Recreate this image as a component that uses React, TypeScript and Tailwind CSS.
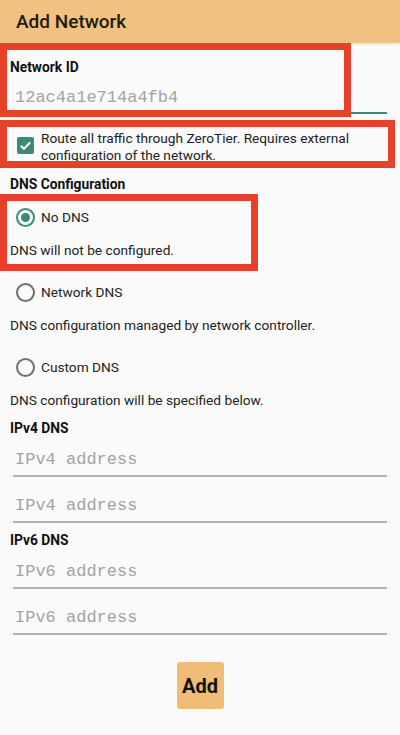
import React from "react";

const font = { fontFamily: "Roboto, 'Noto Sans', sans-serif" };

function Radio({ checked, label }: { checked?: boolean; label: string }) {
  return (
    <div className="flex h-[36px] items-center pl-[16px]">
      <div
        className={
          checked
            ? "flex h-[19px] w-[19px] items-center justify-center rounded-full border-2 border-[#3e8a76]"
            : "h-[19px] w-[19px] rounded-full border-2 border-[#6f6f6f]"
        }
      >
        {checked && <div className="h-[9px] w-[9px] rounded-full bg-[#3e8a76]" />}
      </div>
      <span className="ml-[6px] text-[13.7px] leading-[20px] text-[#222]">{label}</span>
    </div>
  );
}

function Field({ text, active, className }: { text: string; active?: boolean; className?: string }) {
  return (
    <div
      className={
        "mx-[13px] flex items-center border-b-2 pl-[2px] " +
        (active ? "border-[#3e8a76] " : "border-[#b3b3b3] ") +
        (className ?? "")
      }
    >
      <span
        className="text-[17px] leading-[24px] text-[#a3a3a3]"
        style={{ fontFamily: "'Liberation Mono', 'Courier New', monospace" }}
      >
        {text}
      </span>
    </div>
  );
}

export default function App() {
  return (
    <div className="relative h-[735px] w-[400px] overflow-hidden bg-[#fafafa]" style={font}>
      <header className="flex h-[43px] items-center bg-[#f0c180] pl-[16px] shadow-[0_1px_3px_rgba(0,0,0,0.12)]">
        <h1 className="text-[19px] font-medium leading-none text-[#1e1a14]">Add Network</h1>
      </header>

      <main className="flex flex-col">
        <div className="mt-[14px] pl-[10px] text-[13.8px] font-bold leading-[20px] text-[#111]">Network ID</div>
        <Field text="12ac4a1e714a4fb4" active className="mt-[6px] h-[31px]" />

        <label className="mt-[16px] flex items-start pl-[17px] pr-[14px]">
          <span className="mt-[7px] flex h-[17px] w-[17px] shrink-0 items-center justify-center rounded-[2px] bg-[#3e8a76]">
            <svg viewBox="0 0 24 24" className="h-[15px] w-[15px]" fill="none" stroke="#fff" strokeWidth="3.2">
              <path d="M4.5 12.5l5 5L19.5 7" />
            </svg>
          </span>
          <span className="ml-[7px] text-[13.7px] leading-[17px] text-[#222]">
            Route all traffic through ZeroTier. Requires external configuration of the network.
          </span>
        </label>

        <div className="mt-[10px] pl-[10px] text-[13.8px] font-bold leading-[20px] text-[#111]">DNS Configuration</div>

        <div className="mt-[5px]">
          <Radio checked label="No DNS" />
        </div>
        <p className="mt-[5px] pl-[10px] text-[13.7px] leading-[20px] text-[#222]">DNS will not be configured.</p>

        <div className="mt-[14px]">
          <Radio label="Network DNS" />
        </div>
        <p className="mt-[5px] pl-[10px] text-[13.7px] leading-[20px] text-[#222]">
          DNS configuration managed by network controller.
        </p>

        <div className="mt-[14px]">
          <Radio label="Custom DNS" />
        </div>
        <p className="mt-[5px] pl-[10px] text-[13.7px] leading-[20px] text-[#222]">
          DNS configuration will be specified below.
        </p>

        <div className="mt-[8px] pl-[10px] text-[13.8px] font-bold leading-[20px] text-[#111]">IPv4 DNS</div>
        <Field text="IPv4 address" className="mt-[7px] h-[32px]" />
        <Field text="IPv4 address" className="mt-[14px] h-[32px]" />

        <div className="mt-[7px] pl-[10px] text-[13.8px] font-bold leading-[20px] text-[#111]">IPv6 DNS</div>
        <Field text="IPv6 address" className="mt-[7px] h-[32px]" />
        <Field text="IPv6 address" className="mt-[14px] h-[32px]" />

        <div className="mt-[27px] flex justify-center">
          <button className="h-[47px] w-[47px] rounded-[3px] bg-[#f0bd78] text-[20px] font-bold text-[#111]">
            Add
          </button>
        </div>
      </main>

      {/* annotation boxes */}
      <div className="pointer-events-none absolute left-0 top-[43px] h-[74px] w-[351px] border-[7px] border-[#e6412b]" />
      <div className="pointer-events-none absolute left-0 top-[120px] h-[48px] w-[395px] border-[7px] border-[#e6412b]" />
      <div className="pointer-events-none absolute left-0 top-[194px] h-[77px] w-[258px] border-[7px] border-[#e6412b]" />
    </div>
  );
}
